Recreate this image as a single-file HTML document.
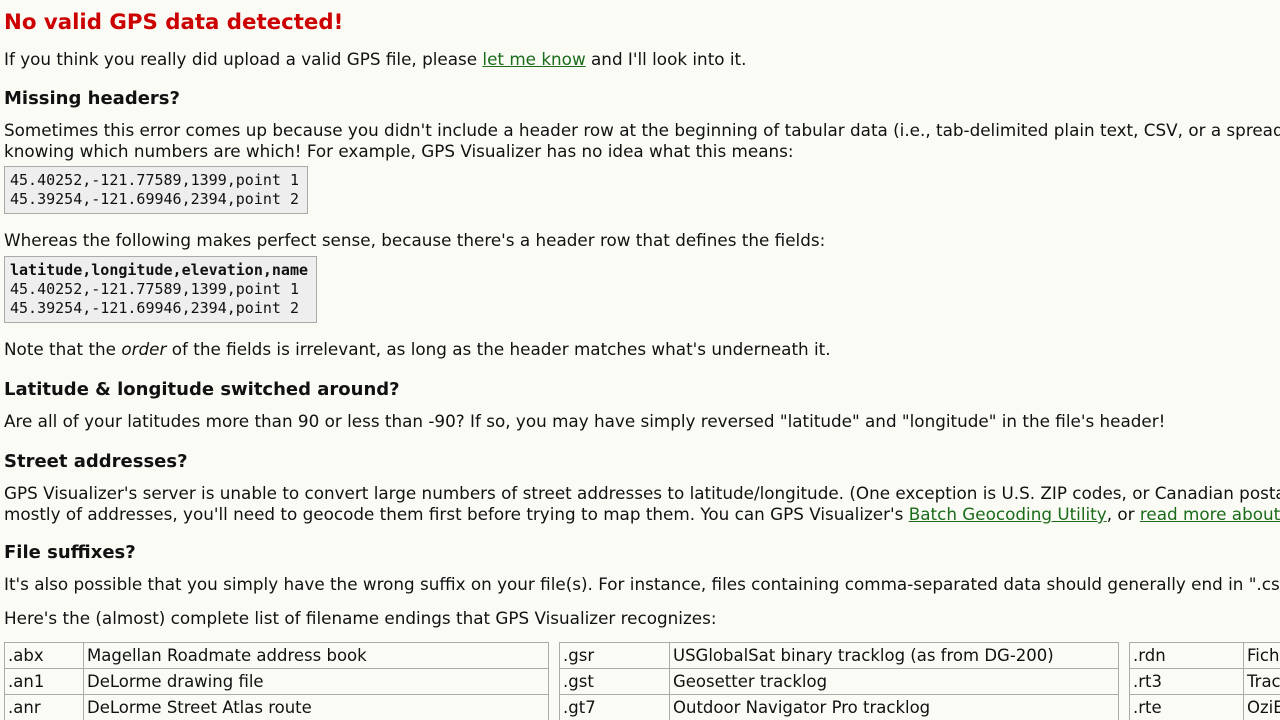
<!DOCTYPE html>
<html><head><meta charset="utf-8"><style>
html,body{margin:0;width:1280px;height:720px;overflow:hidden;background:#fbfbf6;}
body{font-family:"DejaVu Sans","Liberation Sans",sans-serif;font-size:16.8px;color:#111;position:relative;}
.l{position:absolute;left:4px;white-space:nowrap;}
h1{position:absolute;left:4px;top:10px;margin:0;font-size:21.3px;color:#c00;font-weight:bold;white-space:nowrap;}
h2{position:absolute;left:4px;margin:0;font-size:18px;font-weight:bold;white-space:nowrap;}
a{color:#1a6b1a;}
pre{position:absolute;left:4px;margin:0;background:#eee;border:1px solid #aaa;padding:4px 5px;font-family:"DejaVu Sans Mono","Liberation Mono",monospace;font-size:15px;line-height:19px;overflow:hidden;}
table{position:absolute;top:642px;border-collapse:collapse;font-size:16.5px;}
td{border:1px solid #aaa;height:25px;padding:0 3px;white-space:nowrap;}
</style></head><body>
<h1>No valid GPS data detected!</h1>
<div class="l" style="top:49px">If you think you really did upload a valid GPS file, please <a href="#">let me know</a> and I'll look into it.</div>
<h2 style="top:88px">Missing headers?</h2>
<div class="l" style="top:120px;line-height:21px">Sometimes this error comes up because you didn't include a header row at the beginning of tabular data (i.e., tab-delimited plain text, CSV, or a spreadsheet), so there's no way of<br>knowing which numbers are which! For example, GPS Visualizer has no idea what this means:</div>
<pre style="top:166px;width:292px;height:38px">45.40252,-121.77589,1399,point 1
45.39254,-121.69946,2394,point 2</pre>
<div class="l" style="top:230px">Whereas the following makes perfect sense, because there's a header row that defines the fields:</div>
<pre style="top:256px;width:301px;height:57px"><b>latitude,longitude,elevation,name</b>
45.40252,-121.77589,1399,point 1
45.39254,-121.69946,2394,point 2</pre>
<div class="l" style="top:339px">Note that the <i>order</i> of the fields is irrelevant, as long as the header matches what's underneath it.</div>
<h2 style="top:379px">Latitude &amp; longitude switched around?</h2>
<div class="l" style="top:411px">Are all of your latitudes more than 90 or less than -90? If so, you may have simply reversed "latitude" and "longitude" in the file's header!</div>
<h2 style="top:451px">Street addresses?</h2>
<div class="l" style="top:483px;line-height:21px">GPS Visualizer's server is unable to convert large numbers of street addresses to latitude/longitude. (One exception is U.S. ZIP codes, or Canadian postal codes.) If your data consists<br>mostly of addresses, you'll need to geocode them first before trying to map them. You can GPS Visualizer's <a href="#">Batch Geocoding Utility</a>, or <a href="#">read more about geocoding</a>.</div>
<h2 style="top:542px">File suffixes?</h2>
<div class="l" style="top:574px">It's also possible that you simply have the wrong suffix on your file(s). For instance, files containing comma-separated data should generally end in ".csv".</div>
<div class="l" style="top:608px">Here's the (almost) complete list of filename endings that GPS Visualizer recognizes:</div>
<table style="left:4px;width:545px"><tr><td style="width:72px">.abx</td><td>Magellan Roadmate address book</td></tr><tr><td>.an1</td><td>DeLorme drawing file</td></tr><tr><td>.anr</td><td>DeLorme Street Atlas route</td></tr></table>
<table style="left:559px;width:560px"><tr><td style="width:103px">.gsr</td><td>USGlobalSat binary tracklog (as from DG-200)</td></tr><tr><td>.gst</td><td>Geosetter tracklog</td></tr><tr><td>.gt7</td><td>Outdoor Navigator Pro tracklog</td></tr></table>
<table style="left:1129px;width:400px"><tr><td style="width:107px">.rdn</td><td>Fichier Rando</td></tr><tr><td>.rt3</td><td>TrackMaker route</td></tr><tr><td>.rte</td><td>OziExplorer route</td></tr></table>
</body></html>
